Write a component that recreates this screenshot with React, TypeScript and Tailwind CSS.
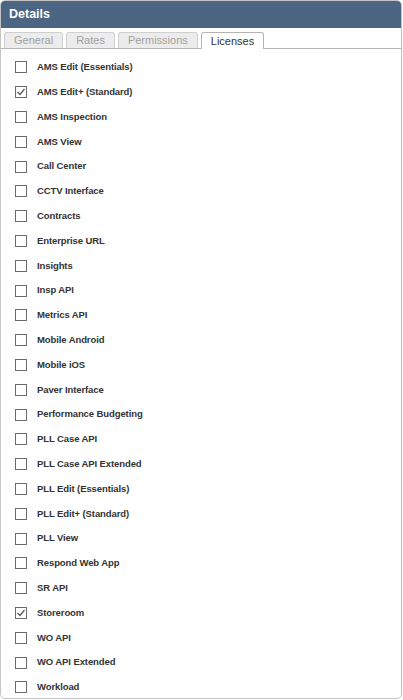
import React from 'react'

const licenses: { name: string; checked?: boolean }[] = [
  { name: 'AMS Edit (Essentials)' },
  { name: 'AMS Edit+ (Standard)', checked: true },
  { name: 'AMS Inspection' },
  { name: 'AMS View' },
  { name: 'Call Center' },
  { name: 'CCTV Interface' },
  { name: 'Contracts' },
  { name: 'Enterprise URL' },
  { name: 'Insights' },
  { name: 'Insp API' },
  { name: 'Metrics API' },
  { name: 'Mobile Android' },
  { name: 'Mobile iOS' },
  { name: 'Paver Interface' },
  { name: 'Performance Budgeting' },
  { name: 'PLL Case API' },
  { name: 'PLL Case API Extended' },
  { name: 'PLL Edit (Essentials)' },
  { name: 'PLL Edit+ (Standard)' },
  { name: 'PLL View' },
  { name: 'Respond Web App' },
  { name: 'SR API' },
  { name: 'Storeroom', checked: true },
  { name: 'WO API' },
  { name: 'WO API Extended' },
  { name: 'Workload' },
]

const tabs = ['General', 'Rates', 'Permissions', 'Licenses']

function Checkbox({ checked }: { checked?: boolean }) {
  return (
    <span className="w-[12px] h-[12px] border border-[#6b6b6b] bg-white flex items-center justify-center shrink-0">
      {checked && (
        <svg width="10" height="10" viewBox="0 0 10 10">
          <path d="M1.5 5 L4 7.5 L8.5 2" fill="none" stroke="#555" strokeWidth="1.2" />
        </svg>
      )}
    </span>
  )
}

export default function App() {
  return (
    <div className="w-[403px] h-[700px] bg-white overflow-hidden" style={{ fontFamily: '"Liberation Sans", Arial, sans-serif' }}>
      <div className="w-[402px] h-[699px] border border-[#c4c4c4] rounded-[5px] overflow-hidden flex flex-col">
        {/* header */}
        <div className="h-[27px] bg-[#4b6582] flex items-center px-[8px] shrink-0">
          <span className="text-white font-bold text-[12.5px]">Details</span>
        </div>

        {/* tabs */}
        <div className="flex items-end gap-[3px] pl-[3px] pt-[5px] border-b border-[#b4b4b4] h-[21px] shrink-0">
          {tabs.map((t) => {
            const active = t === 'Licenses'
            return (
              <div
                key={t}
                className={
                  active
                    ? 'h-[17px] -mb-px bg-white border border-b-0 border-[#b4b4b4] rounded-t-[3px] px-[9px] text-[11px] leading-[16px] text-[#333]'
                    : 'h-[16px] bg-[#ececec] border border-b-0 border-[#cfcfcf] rounded-t-[3px] px-[9px] text-[11px] leading-[15px] text-[#a0a0a0]'
                }
              >
                {t}
              </div>
            )
          })}
        </div>

        {/* list */}
        <div className="pt-[6px] pl-[14px] flex flex-col">
          {licenses.map((l) => (
            <div key={l.name} className="h-[24.8px] flex items-center gap-[10px] shrink-0">
              <Checkbox checked={l.checked} />
              <span className="text-[9.5px] font-bold text-[#333] tracking-[-0.1px]">{l.name}</span>
            </div>
          ))}
        </div>
      </div>
    </div>
  )
}
